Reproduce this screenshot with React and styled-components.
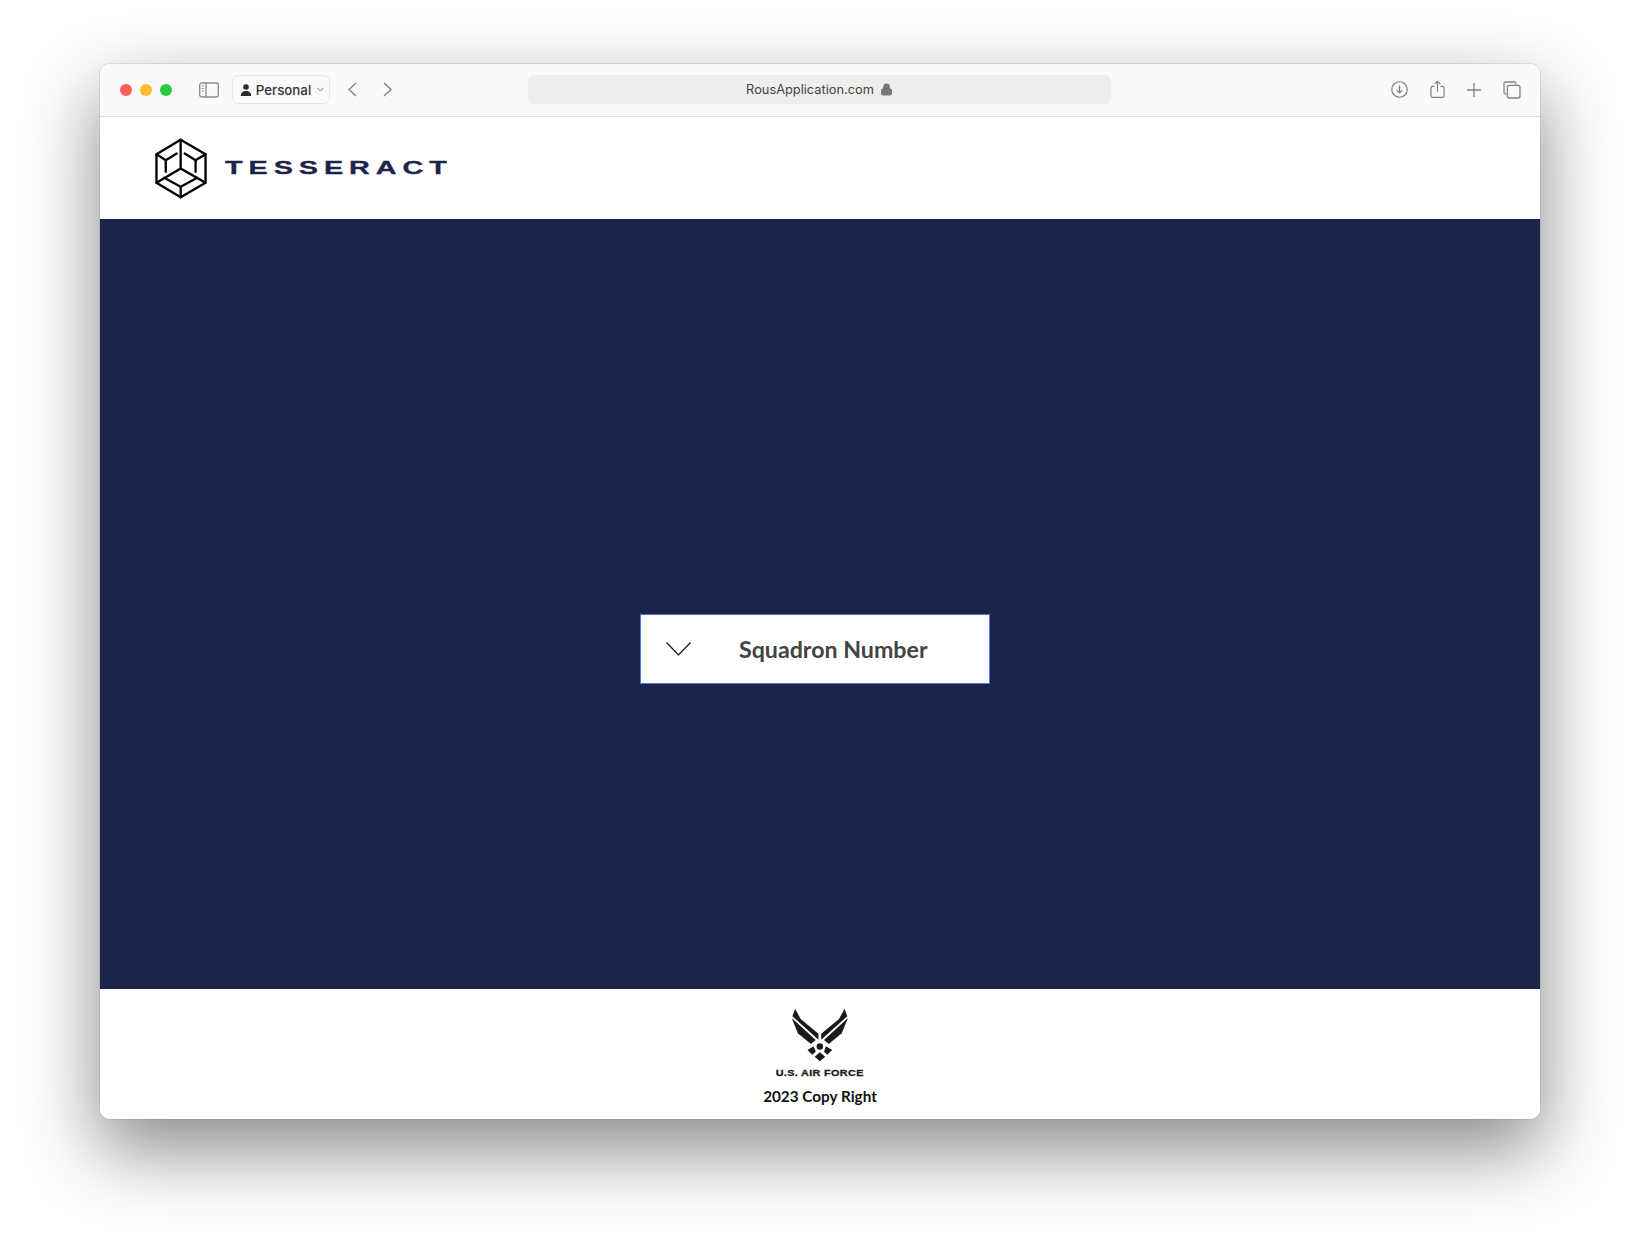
import React from 'react';
import styled, { createGlobalStyle } from 'styled-components';
import { ChevronDown, Lock } from 'lucide-react';

const GlobalStyle = createGlobalStyle`
  html, body {
    margin: 0;
    padding: 0;
    background: #ffffff;
  }
  * {
    box-sizing: border-box;
  }
`;

const Page = styled.div`
  width: 1640px;
  height: 1255px;
  padding: 64px 100px 0;
  background: #ffffff;
  overflow: hidden;
`;

const Window = styled.div`
  height: 1055px;
  border-radius: 10px;
  display: flex;
  flex-direction: column;
  overflow: hidden;
  box-shadow: 0 0 0 1px rgba(0, 0, 0, 0.07), 0 30px 75px 2px rgba(0, 0, 0, 0.46);
`;

const Toolbar = styled.div`
  height: 53px;
  flex: none;
  display: grid;
  grid-template-columns: 408px 583px 1fr;
  align-items: center;
  padding: 0 19px 1px 20px;
  background: #fafafa;
  border-bottom: 1px solid #dcdcdc;
`;

const LeftGroup = styled.div`
  display: flex;
  align-items: center;
`;

const Lights = styled.div`
  display: flex;
  gap: 8px;
  margin-right: 27px;
`;

const Light = styled.span`
  width: 12px;
  height: 12px;
  border-radius: 50%;
  background: ${(p) => p.$color};
`;

const ProfileButton = styled.div`
  width: 98px;
  height: 29px;
  margin-left: 13px;
  padding-left: 4px;
  display: flex;
  align-items: center;
  justify-content: center;
  gap: 4px;
  border: 1px solid #e6e6e6;
  border-radius: 6px;
  font: 500 13.3px Inter, "Liberation Sans", sans-serif;
  color: #333333;
`;

const NavGroup = styled.div`
  display: flex;
  gap: 26px;
  margin-left: 17px;
`;

const AddressBar = styled.div`
  height: 29px;
  display: flex;
  align-items: center;
  justify-content: center;
  gap: 6px;
  border-radius: 6px;
  background: #eeeeee;
  font: 400 12.8px Inter, "Liberation Sans", sans-serif;
  color: #444444;
`;

const Actions = styled.div`
  display: flex;
  align-items: center;
  justify-content: flex-end;
  gap: 22px;
`;

const Header = styled.header`
  height: 102px;
  flex: none;
  display: flex;
  align-items: center;
  padding-left: 54px;
  background: #ffffff;
`;

const Wordmark = styled.div`
  margin-left: 16px;
  width: 140px;
  font: 700 18px "Liberation Sans", sans-serif;
  letter-spacing: 3.7px;
  line-height: 14px;
  color: #1d2449;
  -webkit-text-stroke: 0.3px #1d2449;
  transform: scaleX(1.6);
  transform-origin: left center;
  white-space: nowrap;
`;

const Main = styled.main`
  flex: 1;
  display: flex;
  align-items: center;
  justify-content: center;
  padding: 90px 10px 0 0;
  background: #1d2449;
`;

const Dropdown = styled.div`
  width: 350px;
  height: 70px;
  display: flex;
  align-items: center;
  padding-left: 25px;
  background: #ffffff;
  border: 1px solid #4f78e8;
`;

const DropdownLabel = styled.span`
  margin-left: 48px;
  font: 700 23.2px Lato, "Noto Sans", sans-serif;
  color: #434343;
  white-space: nowrap;
`;

const Footer = styled.footer`
  height: 130px;
  flex: none;
  display: flex;
  flex-direction: column;
  align-items: center;
  padding-top: 18px;
  background: #ffffff;
`;

const ForceLabel = styled.div`
  margin-top: 6px;
  font: 700 9px "Liberation Sans", sans-serif;
  letter-spacing: 0.3px;
  line-height: 10px;
  color: #1c1c1c;
  -webkit-text-stroke: 0.3px #1c1c1c;
  transform: scaleX(1.2);
`;

const CopyRight = styled.div`
  margin-top: 8px;
  font: 700 15.3px Lato, "Noto Sans", sans-serif;
  line-height: 20px;
  color: #111111;
`;

function SidebarIcon() {
  return (
    <svg width="20" height="16" viewBox="0 0 20 16" fill="none" stroke="#8a8a8a" strokeWidth="1.3">
      <rect x="0.7" y="1" width="18.6" height="14" rx="2" />
      <path d="M7 1v14" />
      <path d="M2.8 4h2M2.8 6.5h2M2.8 9h2" strokeWidth="1" />
    </svg>
  );
}

function PersonIcon() {
  return (
    <svg width="12" height="12" viewBox="0 0 12 12" fill="#2b2b2b">
      <circle cx="6" cy="3" r="2.8" />
      <path d="M0.8 12c0-3.4 2.2-5 5.2-5s5.2 1.6 5.2 5z" />
    </svg>
  );
}

function NavChevron({ dir }) {
  return (
    <svg width="10" height="15" viewBox="0 0 10 15" fill="none" stroke="#808080" strokeWidth="1.4">
      <path d={dir === 'left' ? 'M9 1 2 7.5 9 14' : 'M1 1 8 7.5 1 14'} />
    </svg>
  );
}

function DownloadIcon() {
  return (
    <svg width="17" height="17" viewBox="0 0 18 18" fill="none" stroke="#808080" strokeWidth="1.3">
      <circle cx="9" cy="9" r="8.2" />
      <path d="M9 4.8v7.6M5.9 9.6 9 12.6l3.1-3" />
    </svg>
  );
}

function ShareIcon() {
  return (
    <svg width="15" height="19" viewBox="0 0 16 20" fill="none" stroke="#808080" strokeWidth="1.3">
      <path d="M4.8 6.6H2.6a1.6 1.6 0 0 0-1.6 1.6v8.6A1.6 1.6 0 0 0 2.6 18.4h10.8a1.6 1.6 0 0 0 1.6-1.6V8.2a1.6 1.6 0 0 0-1.6-1.6h-2.2" />
      <path d="M8 12.4V1.2M5 4 8 1.2 11 4" />
    </svg>
  );
}

function PlusIcon() {
  return (
    <svg width="14" height="14" viewBox="0 0 14 14" fill="none" stroke="#808080" strokeWidth="1.3">
      <path d="M7 0v14M0 7h14" />
    </svg>
  );
}

function TabsIcon() {
  return (
    <svg width="18" height="18" viewBox="0 0 18 18" fill="none" stroke="#808080" strokeWidth="1.3">
      <path d="M3.6 12.8H2.6A1.6 1.6 0 0 1 1 11.2V2.6A1.6 1.6 0 0 1 2.6 1h8.6a1.6 1.6 0 0 1 1.6 1.6v1" />
      <rect x="4.4" y="4.4" width="12.6" height="12.6" rx="2" />
    </svg>
  );
}

function TesseractLogo() {
  return (
    <svg width="55" height="63" viewBox="40 20 165 190" fill="none" stroke="#000000" strokeWidth="7" strokeLinejoin="round" strokeLinecap="round">
      <path d="M120 28 195 72V158L120 202 47 158V72Z" />
      <path d="M120 28V115M47 158 120 115 195 158M70 143 120 170 170 143M120 170V202" />
      <path d="M47 72 75 90V125M75 90 108 70M195 72 165 90V125M165 90 132 70" />
    </svg>
  );
}

function AirForceLogo() {
  return (
    <svg width="60" height="55" viewBox="15 10 175 160" fill="#1a1a1a">
      <path d="M30 15 46 45 98 88 98 105 22 37Z" />
      <path d="M20 42 90 106 76 118 38 86Z" />
      <path d="M174 15 158 45 106 88 106 105 182 37Z" />
      <path d="M184 42 114 106 128 118 166 86Z" />
      <circle cx="102" cy="125" r="9.5" />
      <path d="M66 135 84 124 90 140 80 149Z" />
      <path d="M138 135 120 124 114 140 124 149Z" />
      <path d="M102 142 118 155 102 168 87 155Z" />
    </svg>
  );
}

export default function App() {
  return (
    <>
      <GlobalStyle />
      <Page>
        <Window>
          <Toolbar>
            <LeftGroup>
              <Lights>
                <Light $color="#ff5f57" />
                <Light $color="#febc2e" />
                <Light $color="#28c840" />
              </Lights>
              <SidebarIcon />
              <ProfileButton>
                <PersonIcon />
                Personal
                <ChevronDown size={11} strokeWidth={2} color="#666666" />
              </ProfileButton>
              <NavGroup>
                <NavChevron dir="left" />
                <NavChevron dir="right" />
              </NavGroup>
            </LeftGroup>
            <AddressBar>
              RousApplication.com
              <Lock size={13} fill="#777777" color="#777777" />
            </AddressBar>
            <Actions>
              <DownloadIcon />
              <ShareIcon />
              <PlusIcon />
              <TabsIcon />
            </Actions>
          </Toolbar>
          <Header>
            <TesseractLogo />
            <Wordmark>TESSERACT</Wordmark>
          </Header>
          <Main>
            <Dropdown>
              <svg width="25" height="14" viewBox="0 0 25 14" fill="none" stroke="#111111" strokeWidth="1.2">
                <path d="M0.5 0.5 12.5 13 24.5 0.5" />
              </svg>
              <DropdownLabel>Squadron Number</DropdownLabel>
            </Dropdown>
          </Main>
          <Footer>
            <AirForceLogo />
            <ForceLabel>U.S. AIR FORCE</ForceLabel>
            <CopyRight>2023 Copy Right</CopyRight>
          </Footer>
        </Window>
      </Page>
    </>
  );
}
